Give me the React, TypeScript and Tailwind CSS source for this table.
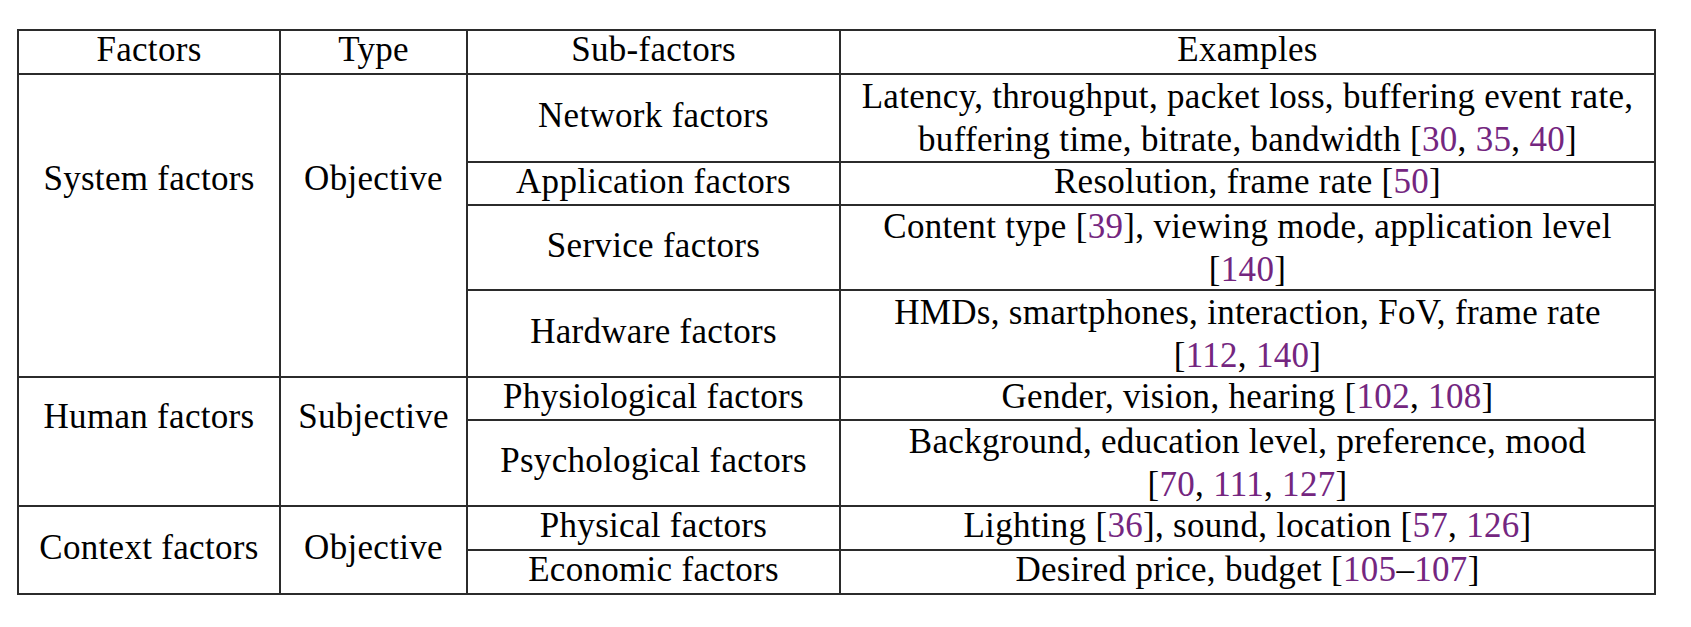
import type { ReactNode } from 'react'

const cite = (n: string) => <span className="text-[#74267f]">{n}</span>

type Row = {
  group?: { factor: string; type: string; span: number; pad: string }
  sub: string
  ex: ReactNode
  h: string
  two?: boolean
}

const ROWS: Row[] = [
  {
    group: { factor: 'System factors', type: 'Objective', span: 4, pad: 'align-top pt-[86px]' },
    sub: 'Network factors',
    ex: (
      <>
        Latency, throughput, packet loss, buffering event rate,
        <br />
        buffering time, bitrate, bandwidth [{cite('30')}, {cite('35')}, {cite('40')}]
      </>
    ),
    h: 'h-[88px]',
    two: true,
  },
  { sub: 'Application factors', ex: <>Resolution, frame rate [{cite('50')}]</>, h: 'h-[43px]' },
  {
    sub: 'Service factors',
    ex: (
      <>
        Content type [{cite('39')}], viewing mode, application level
        <br />[{cite('140')}]
      </>
    ),
    h: 'h-[85px]',
    two: true,
  },
  {
    sub: 'Hardware factors',
    ex: (
      <>
        HMDs, smartphones, interaction, FoV, frame rate
        <br />[{cite('112')}, {cite('140')}]
      </>
    ),
    h: 'h-[87px]',
    two: true,
  },
  {
    group: { factor: 'Human factors', type: 'Subjective', span: 2, pad: 'align-top pt-[21px]' },
    sub: 'Physiological factors',
    ex: <>Gender, vision, hearing [{cite('102')}, {cite('108')}]</>,
    h: 'h-[43px]',
  },
  {
    sub: 'Psychological factors',
    ex: (
      <>
        Background, education level, preference, mood
        <br />[{cite('70')}, {cite('111')}, {cite('127')}]
      </>
    ),
    h: 'h-[86px]',
    two: true,
  },
  {
    group: { factor: 'Context factors', type: 'Objective', span: 2, pad: 'align-middle pb-[4px]' },
    sub: 'Physical factors',
    ex: <>Lighting [{cite('36')}], sound, location [{cite('57')}, {cite('126')}]</>,
    h: 'h-[44px]',
  },
  { sub: 'Economic factors', ex: <>Desired price, budget [{cite('105')}–{cite('107')}]</>, h: 'h-[44px]' },
]

const cell = 'border-2 border-[#2b2b2b] text-center px-0'
const one = 'align-middle pt-0 pb-[4px] leading-[36px]'

export default function App() {
  return (
    <div className="w-[1691px] h-[627px] bg-white pt-[29px] pl-[17px] font-['Liberation_Serif',serif] text-black text-[35px] leading-[36px] tracking-[0.3px]">
      <table className="table-fixed border-collapse w-[1639px]">
        <colgroup>
          <col className="w-[262px]" />
          <col className="w-[187px]" />
          <col className="w-[373px]" />
          <col />
        </colgroup>
        <thead>
          <tr className="h-[44px]">
            <th className={`${cell} ${one} font-normal`}>Factors</th>
            <th className={`${cell} ${one} font-normal`}>Type</th>
            <th className={`${cell} ${one} font-normal`}>Sub-factors</th>
            <th className={`${cell} ${one} font-normal`}>Examples</th>
          </tr>
        </thead>
        <tbody>
          {ROWS.map((r) => (
            <tr key={r.sub} className={r.h}>
              {r.group && (
                <>
                  <td rowSpan={r.group.span} className={`${cell} ${r.group.pad} leading-[36px]`}>
                    {r.group.factor}
                  </td>
                  <td rowSpan={r.group.span} className={`${cell} ${r.group.pad} leading-[36px]`}>
                    {r.group.type}
                  </td>
                </>
              )}
              <td className={`${cell} ${one}`}>{r.sub}</td>
              {r.two ? (
                <td className={`${cell} align-middle py-0`}>
                  <div className="-my-[2px] leading-[43px]">{r.ex}</div>
                </td>
              ) : (
                <td className={`${cell} ${one}`}>{r.ex}</td>
              )}
            </tr>
          ))}
        </tbody>
      </table>
    </div>
  )
}
